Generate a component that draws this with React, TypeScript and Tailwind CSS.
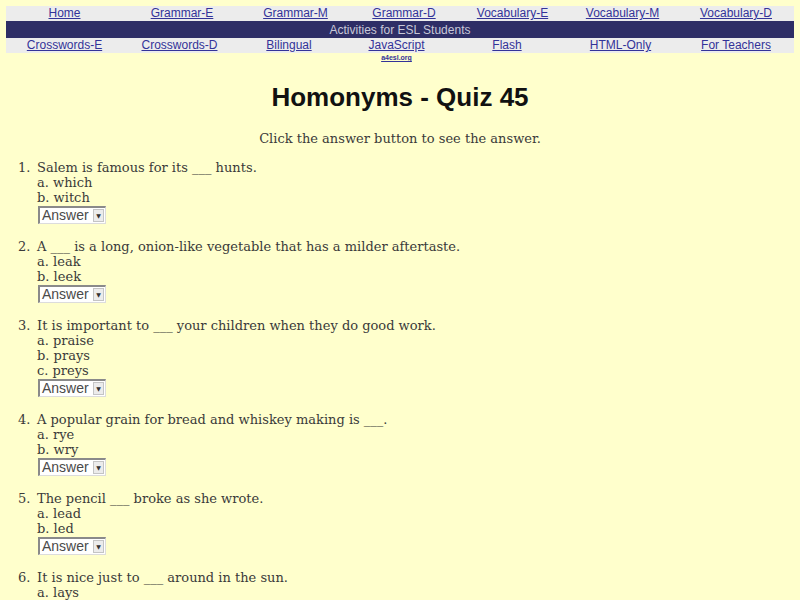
import React from 'react';

const topLinks = ['Home', 'Grammar-E', 'Grammar-M', 'Grammar-D', 'Vocabulary-E', 'Vocabulary-M', 'Vocabulary-D'];
const bottomLinks = ['Crosswords-E', 'Crosswords-D', 'Bilingual', 'JavaScript', 'Flash', 'HTML-Only', 'For Teachers'];

const questions = [
  { q: 'Salem is famous for its ___ hunts.', opts: ['which', 'witch'] },
  { q: 'A ___ is a long, onion-like vegetable that has a milder aftertaste.', opts: ['leak', 'leek'] },
  { q: 'It is important to ___ your children when they do good work.', opts: ['praise', 'prays', 'preys'] },
  { q: 'A popular grain for bread and whiskey making is ___.', opts: ['rye', 'wry'] },
  { q: 'The pencil ___ broke as she wrote.', opts: ['lead', 'led'] },
  { q: 'It is nice just to ___ around in the sun.', opts: ['lays', 'laze'] },
];

const letters = ['a', 'b', 'c', 'd'];

function AnswerBox() {
  return (
    <div className="flex items-stretch h-[18px] w-[68px] bg-white border-t-2 border-l-2 border-t-[#8a8a8a] border-l-[#8a8a8a] border-b border-r border-b-[#dcdcdc] border-r-[#dcdcdc]">
      <span className="flex-1 pl-[2px] text-[14px] leading-[15px] text-[#4a4a4a] font-['Liberation_Sans',Arial,sans-serif]">Answer</span>
      <span className="w-[11px] my-[1px] mr-[1px] flex items-center justify-center bg-[#ececec] border border-[#c4c4c4] text-[6px] text-[#333]">▼</span>
    </div>
  );
}

export default function App() {
  return (
    <div className="h-[600px] overflow-hidden bg-[#ffffcc] pt-[6px] px-[6px] font-['DejaVu_Serif',serif] text-[#3a3a3a]">
      <div className="font-['Liberation_Sans',Arial,sans-serif] text-[12px]">
        <div className="grid grid-cols-[117px_118px_109px_108px_109px_111px_116px] bg-[#ececec] h-[15px] items-center">
          {topLinks.map((l) => (
            <a key={l} href="#" className="text-center text-[#333399] underline leading-[13px]">{l}</a>
          ))}
        </div>
        <div className="bg-[#2e2e66] h-[17px] flex items-center justify-center text-[12px] text-[#c8c8d8]">
          Activities for ESL Students
        </div>
        <div className="grid grid-cols-[117px_113px_106px_109px_112px_115px_116px] bg-[#ececec] h-[15px] items-center">
          {bottomLinks.map((l) => (
            <a key={l} href="#" className="text-center text-[#333399] underline leading-[13px]">{l}</a>
          ))}
        </div>
        <div className="grid grid-cols-[117px_113px_106px_109px_112px_115px_116px]">
          <span className="col-start-4 text-center text-[7px] leading-[9px] font-bold text-[#333399] underline">a4esl.org</span>
        </div>
      </div>

      <h1 className="mt-[20px] text-center text-[26px] leading-[30px] font-bold text-[#111] font-['Liberation_Sans',Arial,sans-serif]">
        Homonyms - Quiz 45
      </h1>
      <p className="mt-[19px] text-center text-[13px] leading-[15px]">Click the answer button to see the answer.</p>

      <ol className="mt-[14px] text-[13px] leading-[15px]">
        {questions.map((item, i) => (
          <li key={i} className="flex mb-[15px]">
            <span className="w-[31px] pl-[12px] shrink-0">{i + 1}.</span>
            <div className="flex flex-col">
              <span>{item.q}</span>
              {item.opts.map((o, j) => (
                <span key={o}>{letters[j]}. {o}</span>
              ))}
              <div className="mt-[1px] ml-[1px]">
                <AnswerBox />
              </div>
            </div>
          </li>
        ))}
      </ol>
    </div>
  );
}
